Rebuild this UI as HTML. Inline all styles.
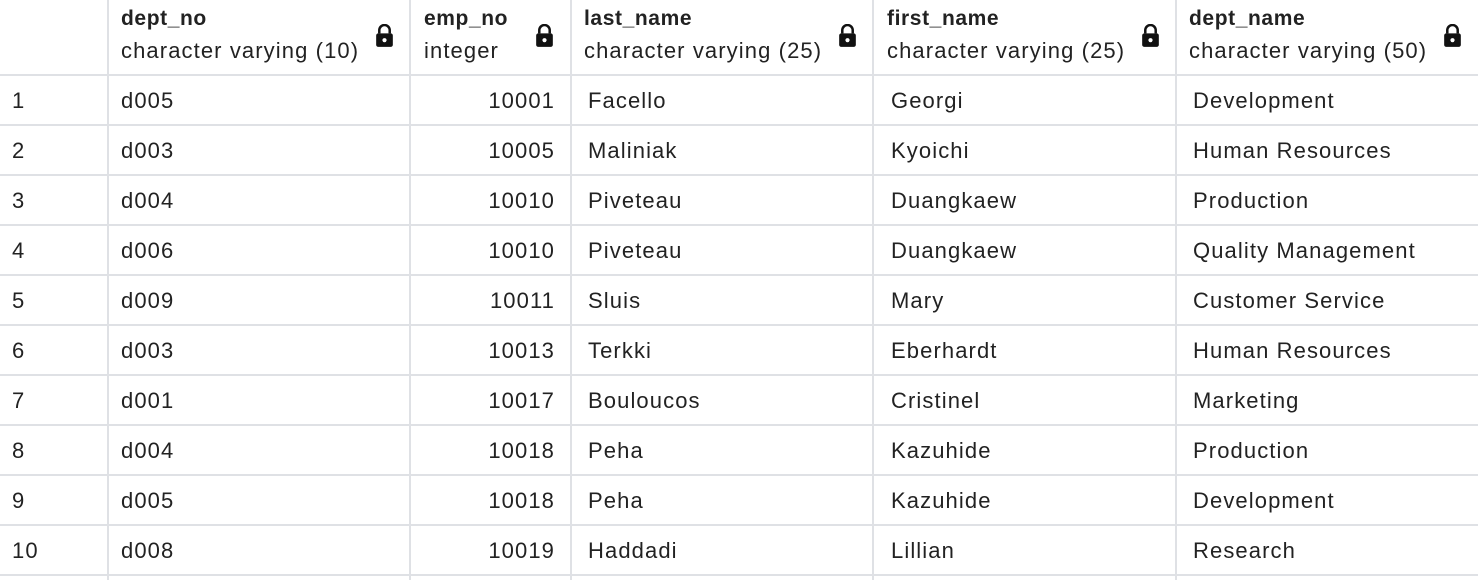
<!DOCTYPE html>
<html><head><meta charset="utf-8"><style>
body{margin:0;width:1478px;height:580px;background:#fff;overflow:hidden;font-family:"Liberation Sans",Roboto,sans-serif;color:#222;position:relative}
.v{position:absolute;top:0;height:580px;width:2px;background:#dfe1e5}
.h{position:absolute;left:0;width:1478px;height:2px;background:#dfe1e5}
.t{position:absolute;font-size:22px;white-space:nowrap;line-height:26px;letter-spacing:1.1px}
.n{font-weight:bold;font-size:21px;letter-spacing:0.6px}
.r{text-align:right}
svg{position:absolute}
</style></head><body>
<div class="v" style="left:107px"></div><div class="v" style="left:409px"></div><div class="v" style="left:570px"></div><div class="v" style="left:872px"></div><div class="v" style="left:1175px"></div>
<div class="h" style="top:74px"></div>
<div class="h" style="top:124px"></div><div class="h" style="top:174px"></div><div class="h" style="top:224px"></div><div class="h" style="top:274px"></div><div class="h" style="top:324px"></div><div class="h" style="top:374px"></div><div class="h" style="top:424px"></div><div class="h" style="top:474px"></div><div class="h" style="top:524px"></div><div class="h" style="top:574px"></div>

<div class="t n" style="left:121px;top:6px">dept_no</div><div class="t" style="left:121px;top:38px">character varying (10)</div>
<div class="t n" style="left:424px;top:6px">emp_no</div><div class="t" style="left:424px;top:38px">integer</div>
<div class="t n" style="left:584px;top:6px">last_name</div><div class="t" style="left:584px;top:38px">character varying (25)</div>
<div class="t n" style="left:887px;top:6px">first_name</div><div class="t" style="left:887px;top:38px">character varying (25)</div>
<div class="t n" style="left:1189px;top:6px">dept_name</div><div class="t" style="left:1189px;top:38px">character varying (50)</div>

<svg width="19" height="25" viewBox="0 0 18 24" style="left:375px;top:24px"><path d="M4 9V6a5 5 0 0 1 10 0v3" fill="none" stroke="#111" stroke-width="2.4"/><rect x="1" y="9" width="16" height="13" rx="2" fill="#111"/><circle cx="9" cy="15.5" r="2" fill="#fff"/></svg>
<svg width="19" height="25" viewBox="0 0 18 24" style="left:535px;top:24px"><path d="M4 9V6a5 5 0 0 1 10 0v3" fill="none" stroke="#111" stroke-width="2.4"/><rect x="1" y="9" width="16" height="13" rx="2" fill="#111"/><circle cx="9" cy="15.5" r="2" fill="#fff"/></svg>
<svg width="19" height="25" viewBox="0 0 18 24" style="left:838px;top:24px"><path d="M4 9V6a5 5 0 0 1 10 0v3" fill="none" stroke="#111" stroke-width="2.4"/><rect x="1" y="9" width="16" height="13" rx="2" fill="#111"/><circle cx="9" cy="15.5" r="2" fill="#fff"/></svg>
<svg width="19" height="25" viewBox="0 0 18 24" style="left:1141px;top:24px"><path d="M4 9V6a5 5 0 0 1 10 0v3" fill="none" stroke="#111" stroke-width="2.4"/><rect x="1" y="9" width="16" height="13" rx="2" fill="#111"/><circle cx="9" cy="15.5" r="2" fill="#fff"/></svg>
<svg width="19" height="25" viewBox="0 0 18 24" style="left:1443px;top:24px"><path d="M4 9V6a5 5 0 0 1 10 0v3" fill="none" stroke="#111" stroke-width="2.4"/><rect x="1" y="9" width="16" height="13" rx="2" fill="#111"/><circle cx="9" cy="15.5" r="2" fill="#fff"/></svg>

<div class="t" style="left:12px;top:88px">1</div><div class="t" style="left:121px;top:88px">d005</div><div class="t r" style="left:420px;width:135px;top:88px">10001</div><div class="t" style="left:588px;top:88px">Facello</div><div class="t" style="left:891px;top:88px">Georgi</div><div class="t" style="left:1193px;top:88px">Development</div>
<div class="t" style="left:12px;top:138px">2</div><div class="t" style="left:121px;top:138px">d003</div><div class="t r" style="left:420px;width:135px;top:138px">10005</div><div class="t" style="left:588px;top:138px">Maliniak</div><div class="t" style="left:891px;top:138px">Kyoichi</div><div class="t" style="left:1193px;top:138px">Human Resources</div>
<div class="t" style="left:12px;top:188px">3</div><div class="t" style="left:121px;top:188px">d004</div><div class="t r" style="left:420px;width:135px;top:188px">10010</div><div class="t" style="left:588px;top:188px">Piveteau</div><div class="t" style="left:891px;top:188px">Duangkaew</div><div class="t" style="left:1193px;top:188px">Production</div>
<div class="t" style="left:12px;top:238px">4</div><div class="t" style="left:121px;top:238px">d006</div><div class="t r" style="left:420px;width:135px;top:238px">10010</div><div class="t" style="left:588px;top:238px">Piveteau</div><div class="t" style="left:891px;top:238px">Duangkaew</div><div class="t" style="left:1193px;top:238px">Quality Management</div>
<div class="t" style="left:12px;top:288px">5</div><div class="t" style="left:121px;top:288px">d009</div><div class="t r" style="left:420px;width:135px;top:288px">10011</div><div class="t" style="left:588px;top:288px">Sluis</div><div class="t" style="left:891px;top:288px">Mary</div><div class="t" style="left:1193px;top:288px">Customer Service</div>
<div class="t" style="left:12px;top:338px">6</div><div class="t" style="left:121px;top:338px">d003</div><div class="t r" style="left:420px;width:135px;top:338px">10013</div><div class="t" style="left:588px;top:338px">Terkki</div><div class="t" style="left:891px;top:338px">Eberhardt</div><div class="t" style="left:1193px;top:338px">Human Resources</div>
<div class="t" style="left:12px;top:388px">7</div><div class="t" style="left:121px;top:388px">d001</div><div class="t r" style="left:420px;width:135px;top:388px">10017</div><div class="t" style="left:588px;top:388px">Bouloucos</div><div class="t" style="left:891px;top:388px">Cristinel</div><div class="t" style="left:1193px;top:388px">Marketing</div>
<div class="t" style="left:12px;top:438px">8</div><div class="t" style="left:121px;top:438px">d004</div><div class="t r" style="left:420px;width:135px;top:438px">10018</div><div class="t" style="left:588px;top:438px">Peha</div><div class="t" style="left:891px;top:438px">Kazuhide</div><div class="t" style="left:1193px;top:438px">Production</div>
<div class="t" style="left:12px;top:488px">9</div><div class="t" style="left:121px;top:488px">d005</div><div class="t r" style="left:420px;width:135px;top:488px">10018</div><div class="t" style="left:588px;top:488px">Peha</div><div class="t" style="left:891px;top:488px">Kazuhide</div><div class="t" style="left:1193px;top:488px">Development</div>
<div class="t" style="left:12px;top:538px">10</div><div class="t" style="left:121px;top:538px">d008</div><div class="t r" style="left:420px;width:135px;top:538px">10019</div><div class="t" style="left:588px;top:538px">Haddadi</div><div class="t" style="left:891px;top:538px">Lillian</div><div class="t" style="left:1193px;top:538px">Research</div>
</body></html>
